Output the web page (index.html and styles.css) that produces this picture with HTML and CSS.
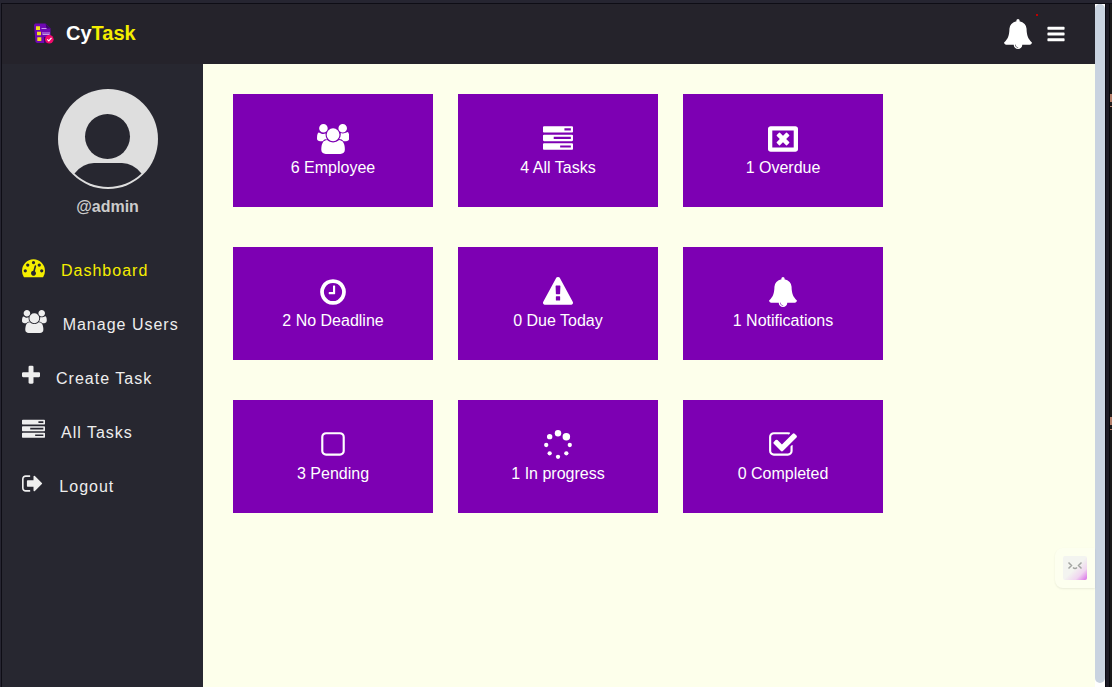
FILE: index.html
```html
<!DOCTYPE html>
<html lang="en">
<head>
<meta charset="UTF-8">
<meta name="viewport" content="width=device-width, initial-scale=1.0">
<title>CyTask - Dashboard</title>
<link rel="stylesheet" href="styles.css">
</head>
<body>

<!-- icon shapes, reused below -->
<svg class="defs" aria-hidden="true">
    <defs>
        <path id="users" d="M657 896q-162 5-265 128h-134q-82 0-138-40.5t-56-118.5q0-353 124-353 6 0 43.5 21t97.5 42.5 119 21.5q67 0 133-23-5 37-5 66 0 159 93 287zm1071 637q0 120-73 189.5t-194 69.5h-874q-121 0-194-69.5t-73-189.5q0-53 3.5-103.5t14-109 26.5-108.5 43-97.5 62-81 85.5-53.5 111.5-20q10 0 43 21.5t73 48 107 48 135 21.5 135-21.5 107-48 73-48 43-21.5q61 0 111.5 20t85.5 53.5 62 81 43 97.5 26.5 108.5 14 109 3.5 103.5zm-1024-1277q0 106-75 181t-181 75-181-75-75-181 75-181 181-75 181 75 75 181zm704 384q0 159-112.5 271.5t-271.5 112.5-271.5-112.5-112.5-271.5 112.5-271.5 271.5-112.5 271.5 112.5 112.5 271.5zm576 225q0 78-56 118.5t-138 40.5h-134q-103-123-265-128 93-128 93-287 0-29-5-66 66 23 133 23 59 0 119-21.5t97.5-42.5 43.5-21q124 0 124 353zm-128-609q0 106-75 181t-181 75-181-75-75-181 75-181 181-75 181 75 75 181z"/>
        <path id="tasks" d="M1024 1408h640v-128h-640v128zm-384-512h1024v-128h-1024v128zm640-512h384v-128h-384v128zm512 832v256q0 26-19 45t-45 19h-1664q-26 0-45-19t-19-45v-256q0-26 19-45t45-19h1664q26 0 45 19t19 45zm0-512v256q0 26-19 45t-45 19h-1664q-26 0-45-19t-19-45v-256q0-26 19-45t45-19h1664q26 0 45 19t19 45zm0-512v256q0 26-19 45t-45 19h-1664q-26 0-45-19t-19-45v-256q0-26 19-45t45-19h1664q26 0 45 19t19 45z"/>
        <g id="close">
            <path fill-rule="evenodd" d="M160 128h1472q66 0 113 47t47 113v1216q0 66-47 113t-113 47h-1472q-66 0-113-47t-47-113v-1216q0-66 47-113t113-47zM256 384v1024h1280v-1024z"/>
            <rect x="466" y="764" width="860" height="264" rx="40" transform="rotate(45 896 896)"/>
            <rect x="466" y="764" width="860" height="264" rx="40" transform="rotate(-45 896 896)"/>
        </g>
        <path id="clock" d="M1024 544v448q0 14-9 23t-23 9h-320q-14 0-23-9t-9-23v-64q0-14 9-23t23-9h224v-352q0-14 9-23t23-9h64q14 0 23 9t9 23zm416 352q0-148-73-273t-198-198-273-73-273 73-198 198-73 273 73 273 198 198 273 73 273-73 198-198 73-273zm224 0q0 209-103 385.5t-279.5 279.5-385.5 103-385.5-103-279.5-279.5-103-385.5 103-385.5 279.5-279.5 385.5-103 385.5 103 279.5 279.5 103 385.5z"/>
        <path id="warning" d="M1024 1375v-190q0-14-9.5-23.5t-22.5-9.5h-192q-13 0-22.5 9.5t-9.5 23.5v190q0 14 9.5 23.5t22.5 9.5h192q13 0 22.5-9.5t9.5-23.5zm-2-374l18-459q0-12-10-19-13-11-24-11h-220q-11 0-24 11-10 7-10 21l17 457q0 10 10 16.5t24 6.5h185q14 0 23.5-6.5t10.5-16.5zm-14-934l768 1408q35 63-2 126-17 29-46.5 46t-63.5 17h-1536q-34 0-63.5-17t-46.5-46q-37-63-2-126l768-1408q17-31 47-49t65-18 65 18 47 49z"/>
        <path id="bell" d="M912 1696q0-16-16-16-59 0-101.5-42.5t-42.5-101.5q0-16-16-16t-16 16q0 73 51.5 124.5t124.5 51.5q16 0 16-16zm816-288q0 52-38 90t-90 38h-448q0 106-75 181t-181 75-181-75-75-181h-448q-52 0-90-38t-38-90q50-42 91-88t85-119.5 74.5-158.5 50-206 19.5-260q0-152 117-282.5t307-158.5q-8-19-8-39 0-40 28-68t68-28 68 28 28 68q0 20-8 39 190 28 307 158.5t117 282.5q0 139 19.5 260t50 206 74.5 158.5 85 119.5 91 88z"/>
        <path id="square" d="M1312 256h-832q-66 0-113 47t-47 113v832q0 66 47 113t113 47h832q66 0 113-47t47-113v-832q0-66-47-113t-113-47zm288 160v832q0 119-84.5 203.5t-203.5 84.5h-832q-119 0-203.5-84.5t-84.5-203.5v-832q0-119 84.5-203.5t203.5-84.5h832q119 0 203.5 84.5t84.5 203.5z"/>
        <g id="spinner">
            <circle cx="896" cy="192" r="192"/>
            <circle cx="1394" cy="398" r="224"/>
            <circle cx="1600" cy="896" r="128"/>
            <circle cx="1394" cy="1394" r="128"/>
            <circle cx="896" cy="1600" r="128"/>
            <circle cx="398" cy="1394" r="128"/>
            <circle cx="192" cy="896" r="128"/>
            <circle cx="398" cy="398" r="160"/>
        </g>
        <path id="check" d="M1472 930v318q0 119-84.5 203.5t-203.5 84.5h-832q-119 0-203.5-84.5t-84.5-203.5v-832q0-119 84.5-203.5t203.5-84.5h832q63 0 117 25 15 7 18 23 3 17-9 29l-49 49q-10 10-23 10-3 0-9-2-23-6-45-6h-832q-66 0-113 47t-47 113v832q0 66 47 113t113 47h832q66 0 113-47t47-113v-254q0-13 9-22l64-64q10-10 23-10 6 0 12 3 20 8 20 29zm231-489l-814 814q-24 24-57 24t-57-24l-430-430q-24-24-24-57t24-57l110-110q24-24 57-24t57 24l263 263 647-647q24-24 57-24t57 24l110 110q24 24 24 57t-24 57z"/>
        <path id="plus" d="M1600 736v192q0 40-28 68t-68 28h-416v416q0 40-28 68t-68 28h-192q-40 0-68-28t-28-68v-416h-416q-40 0-68-28t-28-68v-192q0-40 28-68t68-28h416v-416q0-40 28-68t68-28h192q40 0 68 28t28 68v416h416q40 0 68 28t28 68z"/>
        <path id="sign-out" d="M640 1440q0 4 1 20t.5 26.5-3 23.5-10 19.5-20.5 6.5h-320q-119 0-203.5-84.5t-84.5-203.5v-704q0-119 84.5-203.5t203.5-84.5h320q13 0 22.5 9.5t9.5 22.5q0 4 1 20t.5 26.5-3 23.5-10 19.5-20.5 6.5h-320q-66 0-113 47t-47 113v704q0 66 47 113t113 47h312l11.5 1 11.5 3 8 5.5 7 9 2 13.5zm928-544q0 26-19 45l-544 544q-19 19-45 19t-45-19-19-45v-288h-448q-26 0-45-19t-19-45v-384q0-26 19-45t45-19h448v-288q0-26 19-45t45-19 45 19l544 544q19 19 19 45z"/>
        <path id="tachometer" fill-rule="evenodd" d="M1792 1152q0 261-141 483-19 29-54 29h-1402q-35 0-54-29-141-221-141-483 0-182 71-348t191-286 286-191 348-71 348 71 286 191 191 286 71 348zM128 1152a128 128 0 1 0 256 0a128 128 0 1 0-256 0zM320 704a128 128 0 1 0 256 0a128 128 0 1 0-256 0zM768 512a128 128 0 1 0 256 0a128 128 0 1 0-256 0zM1216 704a128 128 0 1 0 256 0a128 128 0 1 0-256 0zM1408 1152a128 128 0 1 0 256 0a128 128 0 1 0-256 0zM1004 1185l101-382q6-26-7.500-48.500t-38.500-29.500-48 6.500-30 39.500l-101 382q-60 5-107 43.500t-63 98.500q-20 77 20 146t117 89 146-20 89-117q16-60-6-117t-72-91z"/>
        <path id="bars" d="M1664 1344v128q0 26-19 45t-45 19h-1408q-26 0-45-19t-19-45v-128q0-26 19-45t45-19h1408q26 0 45 19t19 45zm0-512v128q0 26-19 45t-45 19h-1408q-26 0-45-19t-19-45v-128q0-26 19-45t45-19h1408q26 0 45 19t19 45zm0-512v128q0 26-19 45t-45 19h-1408q-26 0-45-19t-19-45v-128q0-26 19-45t45-19h1408q26 0 45 19t19 45z"/>
    </defs>
</svg>

<div class="window">
    <div class="page">
        <header class="header">
            <h2 class="u-name">
                <svg class="logo" viewBox="0 0 22 22" aria-hidden="true">
                    <path fill="#6f08b4" d="M3 1.500h10.500l5 5V20l-1 1H5L3.500 20 2 3z"/>
                    <path fill="#3d0668" d="M13.500 1.500l5 5h-4zM12 15h7v6h-7z"/>
                    <path stroke="#c79be8" stroke-width="1" d="M9.500 6.500h5M10 11h8M10.500 12.500h7"/>
                    <path fill="#f2df1c" d="M4 4.300h4V8H4zM5 9.700h4v3.600H5zM5.300 15.200h4V19h-4z"/>
                    <circle cx="17.300" cy="17.300" r="4.300" fill="#f2096b"/>
                    <path fill="none" stroke="#fff" stroke-width="1.200" d="M15.300 17.300l1.500 1.500 2.700-3"/>
                </svg>
                <span>Cy<b>Task</b></span>
            </h2>
            <div class="actions">
                <button class="notification" type="button" aria-label="Notifications">
                    <svg viewBox="64 0 1664 1792"><use href="#bell"/></svg>
                    <span class="badge"></span>
                </button>
                <button class="menu" type="button" aria-label="Toggle menu">
                    <svg viewBox="128 0 1536 1792"><use href="#bars"/></svg>
                </button>
            </div>
        </header>

        <div class="body">
            <nav class="side-bar">
                <div class="user-p">
                    <svg class="avatar" viewBox="0 0 100 100" aria-hidden="true">
                        <circle cx="50" cy="50" r="50" fill="#dedede"/>
                        <circle cx="49.500" cy="47.500" r="22.500" fill="#272730"/>
                        <path fill="#272730" d="M16.500 84.500Q25 74 36 74H64Q75 74 83.500 84.500A48.500 48.500 0 0 1 16.500 84.500z"/>
                    </svg>
                    <h4>@admin</h4>
                </div>
                <ul class="nav-list">
                    <li><a class="active" href="#">
                        <svg viewBox="0 0 1792 1792"><use href="#tachometer"/></svg>
                        <span>Dashboard</span>
                    </a></li>
                    <li><a href="#">
                        <svg viewBox="64 0 1920 1792"><use href="#users"/></svg>
                        <span>Manage Users</span>
                    </a></li>
                    <li><a href="#">
                        <svg viewBox="192 0 1408 1792"><use href="#plus"/></svg>
                        <span>Create Task</span>
                    </a></li>
                    <li><a href="#">
                        <svg viewBox="0 0 1792 1792"><use href="#tasks"/></svg>
                        <span>All Tasks</span>
                    </a></li>
                    <li><a href="#">
                        <svg viewBox="0 0 1664 1792"><use href="#sign-out"/></svg>
                        <span>Logout</span>
                    </a></li>
                </ul>
            </nav>

            <main class="section">
                <div class="dashboard">
                    <div class="dashboard-item">
                        <svg viewBox="64 0 1920 1792"><use href="#users"/></svg>
                        <span>6 Employee</span>
                    </div>
                    <div class="dashboard-item">
                        <svg viewBox="0 0 1792 1792"><use href="#tasks"/></svg>
                        <span>4 All Tasks</span>
                    </div>
                    <div class="dashboard-item">
                        <svg viewBox="0 0 1792 1792"><use href="#close"/></svg>
                        <span>1 Overdue</span>
                    </div>
                    <div class="dashboard-item">
                        <svg viewBox="0 0 1792 1792"><use href="#clock"/></svg>
                        <span>2 No Deadline</span>
                    </div>
                    <div class="dashboard-item">
                        <svg viewBox="0 0 1792 1792"><use href="#warning"/></svg>
                        <span>0 Due Today</span>
                    </div>
                    <div class="dashboard-item">
                        <svg viewBox="0 0 1792 1792"><use href="#bell"/></svg>
                        <span>1 Notifications</span>
                    </div>
                    <div class="dashboard-item">
                        <svg viewBox="0 0 1792 1792"><use href="#square"/></svg>
                        <span>3 Pending</span>
                    </div>
                    <div class="dashboard-item">
                        <svg viewBox="0 0 1792 1792"><use href="#spinner"/></svg>
                        <span>1 In progress</span>
                    </div>
                    <div class="dashboard-item">
                        <svg viewBox="0 0 1792 1792"><use href="#check"/></svg>
                        <span>0 Completed</span>
                    </div>
                </div>
            </main>
        </div>

        <button class="assistant" type="button" aria-label="Assistant">
            <svg viewBox="0 0 24 24">
                <defs>
                    <linearGradient id="face" x1="0" y1="0" x2="1" y2="1">
                        <stop offset="0.500" stop-color="#f3f4f0"/>
                        <stop offset="0.750" stop-color="#f0d5f0"/>
                        <stop offset="1" stop-color="#d96ce8"/>
                    </linearGradient>
                </defs>
                <rect width="24" height="24" rx="2" fill="url(#face)"/>
                <path fill="none" stroke="#a3a5a2" stroke-width="1.500" d="M5.500 6.500l3 3-3 3M18.500 6.500l-3 3 3 3M10 11.500q2 2 4 0"/>
            </svg>
        </button>
    </div>
    <div class="scrollbar"><div class="thumb"></div></div>
    <div class="edge"></div>
</div>

</body>
</html>
```
FILE: styles.css
```css
* {
    box-sizing: border-box;
    margin: 0;
    padding: 0;
}

body {
    background: #0e0d15;
    font-family: "Liberation Sans", Arial, sans-serif;
    font-size: 16px;
    line-height: 18px;
}

svg {
    display: block;
    fill: currentColor;
}

button {
    background: none;
    border: none;
    color: inherit;
    cursor: pointer;
}

.defs {
    position: absolute;
    width: 0;
    height: 0;
}

.window {
    display: flex;
    min-height: 100vh;
    padding: 1px 0 0 1px;
    border-top: 3px solid #262531;
    border-left: 1px solid #262531;
}

.page {
    position: relative;
    flex: 1;
    display: flex;
    flex-direction: column;
}

.header {
    display: flex;
    justify-content: space-between;
    align-items: center;
    height: 60px;
    padding: 0 30px;
    background: #25232b;
    color: #fff;
}

.u-name {
    display: flex;
    align-items: center;
    gap: 12px;
    padding-bottom: 2px;
    font-size: 20px;
    line-height: 22px;
}

.u-name b {
    color: #f5ee00;
}

.logo {
    width: 22px;
    height: 22px;
}

.actions {
    display: flex;
    align-items: center;
    gap: 15px;
}

.notification {
    position: relative;
}

.notification svg {
    width: 28px;
    height: 30px;
}

.badge {
    position: absolute;
    top: -5px;
    right: -6px;
    width: 2px;
    height: 2px;
    background: #c00000;
}

.menu svg {
    width: 18px;
    height: 20px;
}

.body {
    flex: 1;
    display: flex;
}

.side-bar {
    width: 201px;
    padding: 25px 10px 0 20px;
    background: #272730;
    color: #eee;
}

.user-p {
    display: flex;
    flex-direction: column;
    align-items: center;
    gap: 9px;
    color: #ccc;
}

.avatar {
    width: 100px;
    height: 100px;
}

.nav-list {
    display: flex;
    flex-direction: column;
    gap: 30px;
    margin-top: 40px;
    list-style: none;
}

.nav-list a {
    display: flex;
    align-items: flex-start;
    gap: 16px;
    color: #eee;
    letter-spacing: 1px;
    text-decoration: none;
    white-space: nowrap;
}

.nav-list a.active {
    color: #f5ee00;
}

.nav-list svg {
    height: 23px;
}

.nav-list span {
    padding-top: 6px;
}

.section {
    flex: 1;
    padding: 30px;
    background: #fdffeb;
}

.dashboard {
    display: grid;
    grid-template-columns: repeat(3, 200px);
    gap: 40px 25px;
}

.dashboard-item {
    display: flex;
    flex-direction: column;
    align-items: center;
    gap: 5px;
    padding: 30px 0;
    background: #7d00b3;
    color: #fff;
}

.dashboard-item svg {
    height: 30px;
}

.assistant {
    position: absolute;
    right: 0;
    bottom: 99px;
    padding: 8px;
    border-radius: 8px 0 0 8px;
    background: #fdffef;
    box-shadow: 0 1px 2px rgba(0, 0, 0, 0.08);
}

.assistant svg {
    width: 24px;
    height: 24px;
}

.scrollbar {
    width: 10px;
    padding-bottom: 4px;
    background: #fff;
}

.thumb {
    height: 100%;
    border-radius: 5px;
    background: #c9d3e0;
}

/* frame of the window, with a sliver of the editor behind it */
.edge {
    width: 7px;
    border-left: 1px solid #0b0a12;
    background:
        linear-gradient(#b57f6a, #b57f6a) right 90px / 2px 8px no-repeat,
        linear-gradient(#b57f6a, #b57f6a) right 102px / 2px 1px no-repeat,
        linear-gradient(#b57f6a, #b57f6a) right 413px / 2px 8px no-repeat,
        linear-gradient(#b57f6a, #b57f6a) right 425px / 2px 1px no-repeat,
        linear-gradient(to right, #1d1b26 3px, #09090d 3px, #09090d 4px, #1a1a1a 4px);
}
```
